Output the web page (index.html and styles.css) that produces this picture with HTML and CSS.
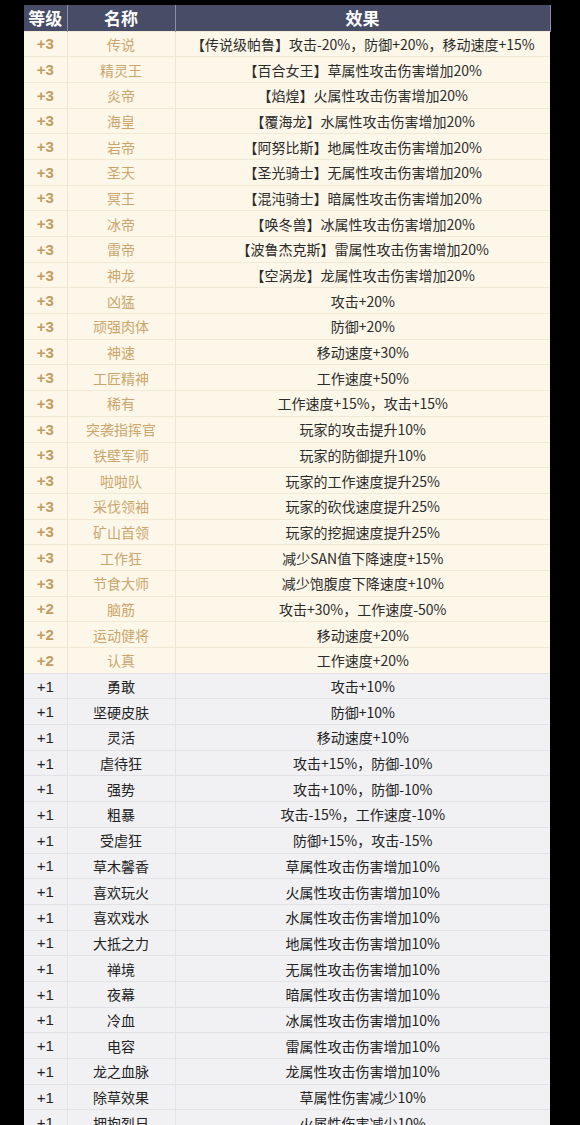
FILE: index.html
```html
<!DOCTYPE html>
<html lang="zh">
<head>
<meta charset="utf-8">
<link rel="stylesheet" href="styles.css">
</head>
<body>
<div class="frame">
<table class="traits">
<colgroup><col class="c-lv"><col class="c-name"><col class="c-eff"></colgroup>
<thead>
<tr><th>等级</th><th>名称</th><th>效果</th></tr>
</thead>
<tbody>
<tr class="gold"><td>+3</td><td>传说</td><td>【传说级帕鲁】攻击-20%，防御+20%，移动速度+15%</td></tr>
<tr class="gold"><td>+3</td><td>精灵王</td><td>【百合女王】草属性攻击伤害增加20%</td></tr>
<tr class="gold"><td>+3</td><td>炎帝</td><td>【焰煌】火属性攻击伤害增加20%</td></tr>
<tr class="gold"><td>+3</td><td>海皇</td><td>【覆海龙】水属性攻击伤害增加20%</td></tr>
<tr class="gold"><td>+3</td><td>岩帝</td><td>【阿努比斯】地属性攻击伤害增加20%</td></tr>
<tr class="gold"><td>+3</td><td>圣天</td><td>【圣光骑士】无属性攻击伤害增加20%</td></tr>
<tr class="gold"><td>+3</td><td>冥王</td><td>【混沌骑士】暗属性攻击伤害增加20%</td></tr>
<tr class="gold"><td>+3</td><td>冰帝</td><td>【唤冬兽】冰属性攻击伤害增加20%</td></tr>
<tr class="gold"><td>+3</td><td>雷帝</td><td>【波鲁杰克斯】雷属性攻击伤害增加20%</td></tr>
<tr class="gold"><td>+3</td><td>神龙</td><td>【空涡龙】龙属性攻击伤害增加20%</td></tr>
<tr class="gold"><td>+3</td><td>凶猛</td><td>攻击+20%</td></tr>
<tr class="gold"><td>+3</td><td>顽强肉体</td><td>防御+20%</td></tr>
<tr class="gold"><td>+3</td><td>神速</td><td>移动速度+30%</td></tr>
<tr class="gold"><td>+3</td><td>工匠精神</td><td>工作速度+50%</td></tr>
<tr class="gold"><td>+3</td><td>稀有</td><td>工作速度+15%，攻击+15%</td></tr>
<tr class="gold"><td>+3</td><td>突袭指挥官</td><td>玩家的攻击提升10%</td></tr>
<tr class="gold"><td>+3</td><td>铁壁军师</td><td>玩家的防御提升10%</td></tr>
<tr class="gold"><td>+3</td><td>啦啦队</td><td>玩家的工作速度提升25%</td></tr>
<tr class="gold"><td>+3</td><td>采伐领袖</td><td>玩家的砍伐速度提升25%</td></tr>
<tr class="gold"><td>+3</td><td>矿山首领</td><td>玩家的挖掘速度提升25%</td></tr>
<tr class="gold"><td>+3</td><td>工作狂</td><td>减少SAN值下降速度+15%</td></tr>
<tr class="gold"><td>+3</td><td>节食大师</td><td>减少饱腹度下降速度+10%</td></tr>
<tr class="gold"><td>+2</td><td>脑筋</td><td>攻击+30%，工作速度-50%</td></tr>
<tr class="gold"><td>+2</td><td>运动健将</td><td>移动速度+20%</td></tr>
<tr class="gold"><td>+2</td><td>认真</td><td>工作速度+20%</td></tr>
<tr class="gray"><td>+1</td><td>勇敢</td><td>攻击+10%</td></tr>
<tr class="gray"><td>+1</td><td>坚硬皮肤</td><td>防御+10%</td></tr>
<tr class="gray"><td>+1</td><td>灵活</td><td>移动速度+10%</td></tr>
<tr class="gray"><td>+1</td><td>虐待狂</td><td>攻击+15%，防御-10%</td></tr>
<tr class="gray"><td>+1</td><td>强势</td><td>攻击+10%，防御-10%</td></tr>
<tr class="gray"><td>+1</td><td>粗暴</td><td>攻击-15%，工作速度-10%</td></tr>
<tr class="gray"><td>+1</td><td>受虐狂</td><td>防御+15%，攻击-15%</td></tr>
<tr class="gray"><td>+1</td><td>草木馨香</td><td>草属性攻击伤害增加10%</td></tr>
<tr class="gray"><td>+1</td><td>喜欢玩火</td><td>火属性攻击伤害增加10%</td></tr>
<tr class="gray"><td>+1</td><td>喜欢戏水</td><td>水属性攻击伤害增加10%</td></tr>
<tr class="gray"><td>+1</td><td>大抵之力</td><td>地属性攻击伤害增加10%</td></tr>
<tr class="gray"><td>+1</td><td>禅境</td><td>无属性攻击伤害增加10%</td></tr>
<tr class="gray"><td>+1</td><td>夜幕</td><td>暗属性攻击伤害增加10%</td></tr>
<tr class="gray"><td>+1</td><td>冷血</td><td>冰属性攻击伤害增加10%</td></tr>
<tr class="gray"><td>+1</td><td>电容</td><td>雷属性攻击伤害增加10%</td></tr>
<tr class="gray"><td>+1</td><td>龙之血脉</td><td>龙属性攻击伤害增加10%</td></tr>
<tr class="gray"><td>+1</td><td>除草效果</td><td>草属性伤害减少10%</td></tr>
<tr class="gray"><td>+1</td><td>拥抱烈日</td><td>火属性伤害减少10%</td></tr>
</tbody>
</table>
</div>
</body>
</html>
```

FILE: styles.css
```css
html, body {
  margin: 0;
  padding: 0;
  background: #000;
}
body {
  width: 580px;
  height: 1125px;
  overflow: hidden;
  font-family: "Noto Sans CJK SC", "Noto Sans", sans-serif;
}
.frame {
  padding: 5px 30px 0 24px;
}
.traits {
  width: 526px;
  border-collapse: collapse;
  table-layout: fixed;
}
.c-lv { width: 43px; }
.c-name { width: 108px; }
.c-eff { width: 375px; }
.traits th {
  height: 25.5px;
  padding: 0;
  background: #474c67;
  color: #fff;
  font-size: 17px;
  font-weight: 700;
  line-height: 1;
  text-align: center;
  border-left: 1px solid #8a8ea3;
}
.traits th:first-child { border-left: none; }
.traits th:last-child { border-right: 1px solid #8a8ea3; }
.traits td {
  height: 24.7px;
  padding: 0;
  font-size: 14px;
  line-height: 1;
  text-align: center;
  white-space: nowrap;
}
.traits td:first-child {
  font-family: "Liberation Sans", "Noto Sans CJK SC", sans-serif;
  font-weight: 700;
  font-size: 15px;
}
.gold td {
  background: #fdf7e9;
  border-top: 1px solid #f1e8d5;
  border-left: 1px solid #efe6d2;
}
.gold td:first-child { color: #c19c5e; border-left: none; }
.gold td:nth-child(2) { color: #caa66d; }
.gold td:nth-child(3) { color: #2b2b2b; }
.gray td {
  background: #f1f1f4;
  border-top: 1px solid #e2e2e7;
  border-left: 1px solid #e4e4e8;
  color: #222;
}
.gray td:first-child { border-left: none; font-weight: 400; }
```
